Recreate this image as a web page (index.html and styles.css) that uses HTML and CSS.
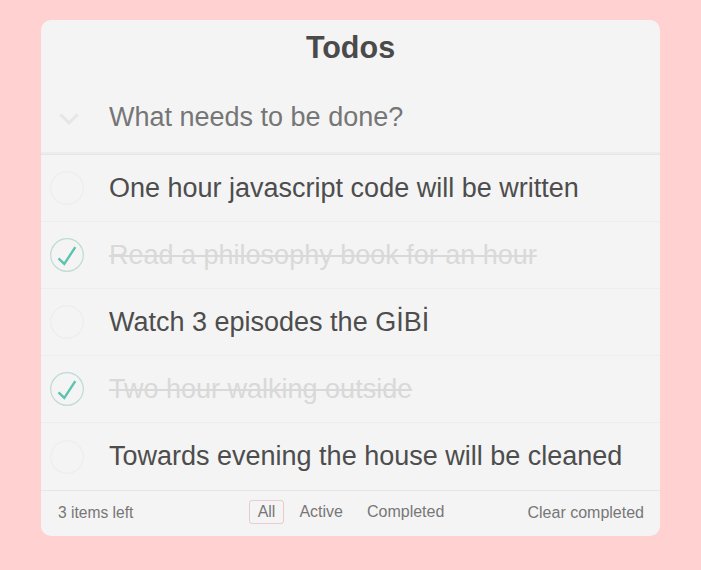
FILE: index.html
```html
<!DOCTYPE html>
<html lang="en">
<head>
<meta charset="utf-8">
<title>Todos</title>
<link rel="stylesheet" href="styles.css">
</head>
<body>
<section class="app">
  <h1 class="title">Todos</h1>
  <div class="new">
    <span class="toggle-all">
      <svg width="20" height="12" viewBox="0 0 20 12"><path d="M1.5 1.5 L10 10 L18.5 1.5" fill="none" stroke="#e6e6e6" stroke-width="3"/></svg>
    </span>
    <input class="new-input" type="text" placeholder="What needs to be done?">
  </div>
  <ul class="list">
    <li class="item">
      <span class="check"><svg width="34" height="34" viewBox="0 0 34 34"><circle cx="17" cy="17" r="16.3" fill="none" stroke="#ededed" stroke-width="1.2"/></svg></span>
      <span class="label">One hour javascript code will be written</span>
    </li>
    <li class="item done">
      <span class="check"><svg width="34" height="34" viewBox="0 0 34 34"><circle cx="17" cy="17" r="16.3" fill="none" stroke="#bddad5" stroke-width="1.2"/><path d="M8.5 20.3 L14.3 25.8 L25.3 9.2" fill="none" stroke="#5dc2af" stroke-width="2.4"/></svg></span>
      <span class="label">Read a philosophy book for an hour</span>
    </li>
    <li class="item">
      <span class="check"><svg width="34" height="34" viewBox="0 0 34 34"><circle cx="17" cy="17" r="16.3" fill="none" stroke="#ededed" stroke-width="1.2"/></svg></span>
      <span class="label">Watch 3 episodes the GİBİ</span>
    </li>
    <li class="item done">
      <span class="check"><svg width="34" height="34" viewBox="0 0 34 34"><circle cx="17" cy="17" r="16.3" fill="none" stroke="#bddad5" stroke-width="1.2"/><path d="M8.5 20.3 L14.3 25.8 L25.3 9.2" fill="none" stroke="#5dc2af" stroke-width="2.4"/></svg></span>
      <span class="label">Two hour walking outside</span>
    </li>
    <li class="item">
      <span class="check"><svg width="34" height="34" viewBox="0 0 34 34"><circle cx="17" cy="17" r="16.3" fill="none" stroke="#ededed" stroke-width="1.2"/></svg></span>
      <span class="label">Towards evening the house will be cleaned</span>
    </li>
  </ul>
  <footer class="footer">
    <span class="count">3 items left</span>
    <ul class="filters">
      <li><a class="filter selected">All</a></li>
      <li><a class="filter">Active</a></li>
      <li><a class="filter">Completed</a></li>
    </ul>
    <span class="clear">Clear completed</span>
  </footer>
</section>
</body>
</html>
```
FILE: styles.css
```css
* { box-sizing: border-box; }
body {
  margin: 0;
  background: #ffd1d1;
  font-family: "Liberation Sans", Arial, sans-serif;
  color: #4d4d4d;
}
.app {
  width: 619px;
  margin: 20px auto 0;
  background: #f4f4f4;
  border-radius: 10px;
  overflow: hidden;
}
.title {
  margin: 0;
  height: 60px;
  line-height: 54px;
  text-align: center;
  font-size: 30.5px;
  font-weight: bold;
  color: #4a4a4a;
}
.new {
  height: 75px;
  display: flex;
  align-items: center;
  box-shadow: inset 0 -2px 1px rgba(0,0,0,0.03);
  border-bottom: 1px solid #e6e6e6;
}
.toggle-all {
  width: 68px;
  padding-left: 18px;
  display: flex;
  align-items: center;
  margin-top: 4px;
}
.new-input {
  flex: 1;
  border: 0;
  background: transparent;
  font: inherit;
  font-size: 27px;
  color: #4d4d4d;
  padding: 0;
  outline: none;
}
.new-input::placeholder { color: #767676; }
.list {
  list-style: none;
  margin: 0;
  padding: 0;
}
.item {
  height: 67px;
  display: flex;
  align-items: center;
  border-bottom: 1px solid #ededed;
}
.item:last-child {
  height: 68px;
  border-bottom: 1px solid #e6e6e6;
}
.check {
  width: 34px;
  height: 34px;
  margin-left: 9px;
  margin-right: 25px;
  display: flex;
}
.label {
  font-size: 27px;
  color: #4d4d4d;
}
.done .label {
  color: #d9d9d9;
  text-decoration: line-through;
}
.footer {
  height: 45px;
  display: grid;
  grid-template-columns: 1fr auto 1fr;
  align-items: center;
  padding: 0 16px 2px 17px;
  color: #777;
  font-size: 15.6px;
}
.filters {
  list-style: none;
  margin: -2px 0 0;
  padding: 0;
  display: flex;
}
.filter {
  display: block;
  margin: 0 3px;
  padding: 2px 8px;
  border: 1px solid transparent;
  border-radius: 3px;
  font-size: 16px;
  color: #777;
}
.filter.selected { border-color: rgba(175,47,47,0.2); }
.clear {
  justify-self: end;
  font-size: 16px;
}
```
